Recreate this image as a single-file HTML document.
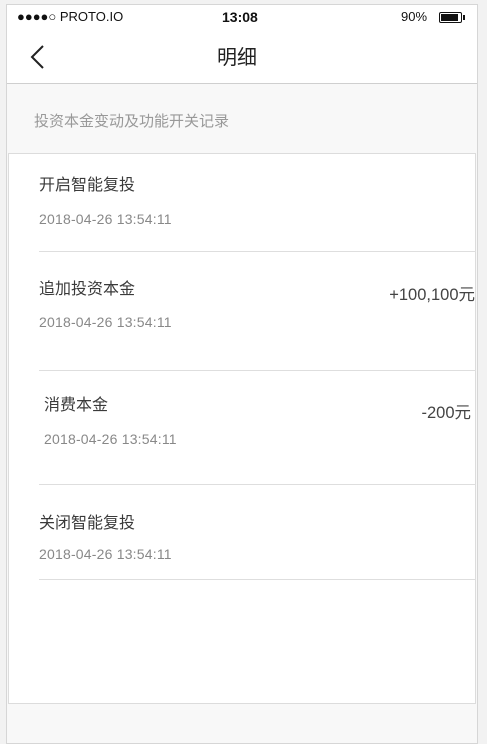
<!DOCTYPE html>
<html><head><meta charset="utf-8"><style>
*{margin:0;padding:0;box-sizing:border-box}
body{width:487px;height:739px;background:#f2f2f2;position:relative;overflow:hidden;font-family:"Liberation Sans","Noto Sans CJK SC",sans-serif}
.frame{position:absolute;left:6px;top:4px;width:472px;height:740px;border:1px solid #d6d6d6;background:#f8f8f8}
.top{position:absolute;left:7px;top:5px;width:470px;height:79px;background:#fff;border-bottom:1px solid #cfcfcf}
.abs{position:absolute;white-space:nowrap}
.card{position:absolute;left:8px;top:153px;width:468px;height:551px;background:#fff;border:1px solid #dcdcdc}
.sep{position:absolute;left:39px;width:437px;height:1px;background:#dedede}
.t{font-size:16px;color:#3a3a3a}
.d{font-size:14px;color:#888;letter-spacing:0.2px}
.a{font-size:16.5px;color:#444}
</style></head><body>
<div class="frame"></div>
<div class="top"></div>
<div class="abs" style="left:17px;top:9px;font-size:13px;color:#111">●●●●○ PROTO.IO</div>
<div class="abs" style="left:222px;top:9px;font-size:14px;font-weight:bold;color:#111">13:08</div>
<div class="abs" style="left:401px;top:9px;font-size:13px;color:#111">90%</div>
<div class="abs" style="left:439px;top:12px;width:23px;height:11px;border:1.5px solid #111;border-radius:2px;padding:1px"><div style="width:17px;height:100%;background:#111"></div></div>
<div class="abs" style="left:463px;top:15px;width:2px;height:5px;background:#111"></div>
<svg class="abs" style="left:28px;top:44px" width="18" height="26"><path d="M15 2 L4 13 L15 24" fill="none" stroke="#222" stroke-width="2"/></svg>
<div class="abs" style="left:217px;top:41px;font-size:20px;color:#222">明细</div>
<div class="abs" style="left:34px;top:110px;font-size:15px;color:#999">投资本金变动及功能开关记录</div>
<div class="card"></div>
<div class="abs t" style="left:39px;top:171px">开启智能复投</div>
<div class="abs d" style="left:39px;top:211px">2018-04-26 13:54:11</div>
<div class="sep" style="top:251px"></div>
<div class="abs t" style="left:39px;top:275px">追加投资本金</div>
<div class="abs a" style="right:12px;top:281px">+100,100元</div>
<div class="abs d" style="left:39px;top:314px">2018-04-26 13:54:11</div>
<div class="sep" style="top:370px"></div>
<div class="abs t" style="left:44px;top:391px">消费本金</div>
<div class="abs a" style="right:16px;top:399px">-200元</div>
<div class="abs d" style="left:44px;top:431px">2018-04-26 13:54:11</div>
<div class="sep" style="top:484px"></div>
<div class="abs t" style="left:39px;top:509px">关闭智能复投</div>
<div class="abs d" style="left:39px;top:546px">2018-04-26 13:54:11</div>
<div class="sep" style="top:579px"></div>
</body></html>
